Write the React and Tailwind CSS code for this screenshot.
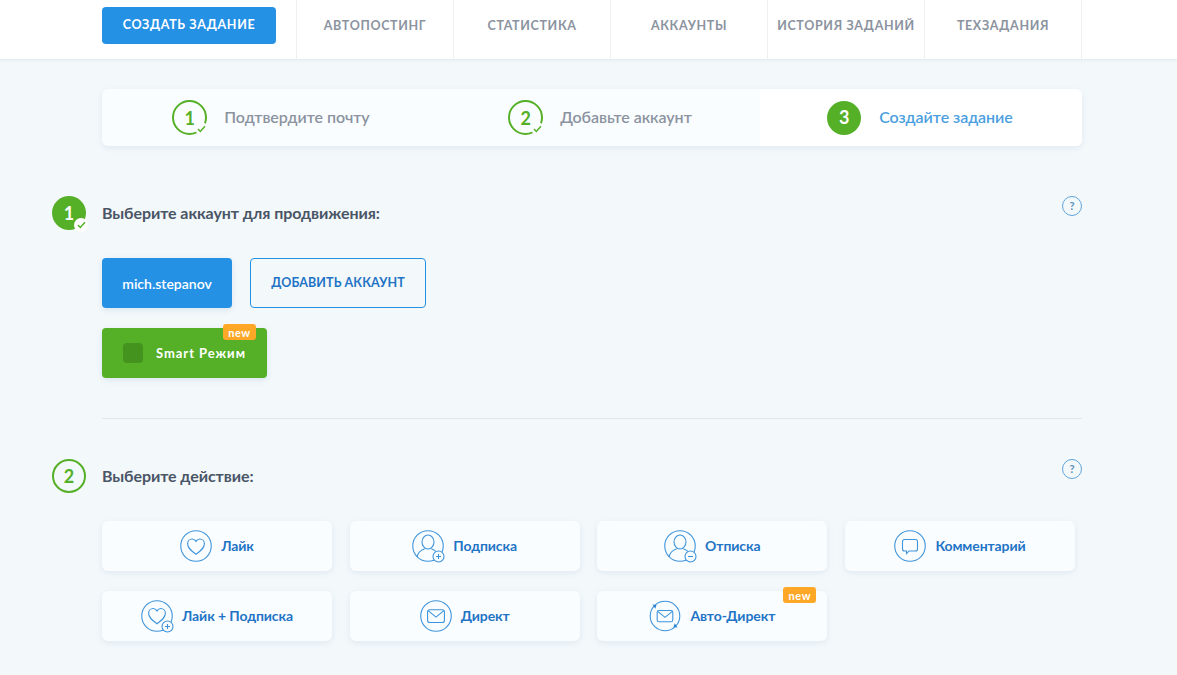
import React from "react";

function Circle() {
  return <circle cx="16" cy="16" r="15.25" fill="none" stroke="#3f94db" strokeWidth="1.1" />;
}
const Plus = ({ minus }) => (
  <g>
    <circle cx="26.5" cy="26.500" r="5.500" fill="#fafdff" stroke="#3f94db" strokeWidth="1.1" />
    <path d={minus ? "M24 26.500h5" : "M24 26.500h5M26.500 24v5"} stroke="#3f94db" strokeWidth="1.1" fill="none" />
  </g>
);
const HeartPath = ({ ty = 0 }) => (
  <path transform={`translate(0 ${ty})`} d="M16 24.300c-4.800-3.500-8.400-6.300-8.400-10.500 0-2.800 2.100-4.800 4.500-4.800 1.600 0 3 .9 3.900 2.400.9-1.500 2.300-2.400 3.900-2.400 2.400 0 4.500 2 4.500 4.800 0 4.200-3.600 7-8.400 10.500z" fill="none" stroke="#3f94db" strokeWidth="1.1" />
);
const Person = () => (
  <g fill="none" stroke="#3f94db" strokeWidth="1.1">
    <ellipse cx="16" cy="12" rx="6" ry="7" />
    <path d="M5 27c.8-4.600 4.400-7 7.800-8.200M27 27c-.8-4.600-4.400-7-7.800-8.200" />
  </g>
);
const Mail = ({ small }) => (
  <g fill="none" stroke="#3f94db" strokeWidth="1.1">
    {small ? (
      <>
        <rect x="8.200" y="10.500" width="15.600" height="11.200" rx="1.800" />
        <path d="M8.700 11.300l7.300 6 7.300-6" />
      </>
    ) : (
      <>
        <rect x="7.600" y="9.700" width="16.800" height="12.800" rx="2" />
        <path d="M8.100 10.600l7.900 6.500 7.900-6.500" />
      </>
    )}
  </g>
);
const Icon = ({ kind }) => {
  const s = { width: 32, height: 32, viewBox: "0 0 32 32", className: "shrink-0 overflow-visible" };
  if (kind === "like") return <svg {...s}><Circle /><HeartPath /></svg>;
  if (kind === "likeplus") return <svg {...s}><Circle /><HeartPath ty={-0.5} /><Plus /></svg>;
  if (kind === "sub") return <svg {...s}><Circle /><Person /><Plus /></svg>;
  if (kind === "unsub") return <svg {...s}><Circle /><Person /><Plus minus /></svg>;
  if (kind === "comment") return (
    <svg {...s}><Circle />
      <path d="M10.500 9.500h11a2 2 0 0 1 2 2v7.500a2 2 0 0 1-2 2h-6.500l-2.500 2.700v-2.700h-2a2 2 0 0 1-2-2v-7.500a2 2 0 0 1 2-2z" fill="none" stroke="#3f94db" strokeWidth="1.1" />
    </svg>);
  if (kind === "mail") return <svg {...s}><Circle /><Mail /></svg>;
  return (
    <svg {...s}>
      <circle cx="16" cy="16" r="14.800" fill="none" stroke="#3f94db" strokeWidth="1.1" />
      <path d="M3.500 4.500l4 .6-1.200 3.600zM28.500 27.500l-4-.6 1.200-3.600z" fill="#2b83d6" />
      <Mail small />
    </svg>);
};

const New = ({ className }) => (
  <span className={`absolute flex h-[16px] w-[33px] items-center justify-center rounded-[3px] bg-[#ffa726] text-[11px] font-bold leading-none tracking-[0.6px] text-white ${className}`}>new</span>
);

const Check = ({ className, bg = "#fafdff" }) => (
  <span className={`absolute flex h-[13px] w-[13px] items-center justify-center rounded-full ${className}`} style={{ background: bg }}>
    <svg width="9" height="8" viewBox="0 0 9 8"><path d="M1 4l2.300 2.500L8 1.300" fill="none" stroke="#55b028" strokeWidth="1.500" /></svg>
  </span>
);

const Help = () => (
  <span className="flex h-[20px] w-[20px] items-center justify-center rounded-full border border-[#5fa5dc] text-[11px] font-bold text-[#5b8fb8]">?</span>
);

function Step({ n, label, w }) {
  return (
    <div className={`flex items-center justify-center gap-[17px] ${w}`}>
      <span className="relative flex h-[35px] w-[35px] items-center justify-center rounded-full border-2 border-[#55b028] pt-[1px] text-[18px] font-bold text-[#55b028]">
        {n}
        <Check className="-bottom-[2px] -right-[3px]" />
      </span>
      <span className="-mt-[2px] text-[16px] font-semibold tracking-[-0.05px] text-[#8b939f]">{label}</span>
    </div>
  );
}

function Card({ icon, label, badge }) {
  return (
    <div className="relative flex h-[50px] w-[230px] items-center justify-center rounded-[6px] bg-[#fafdff] shadow-[0_2px_6px_rgba(90,130,170,0.12)]">
      <div className="flex items-center gap-[9px]">
        <Icon kind={icon} />
        <span className="-mt-[2px] text-[14px] font-bold tracking-[-0.1px] text-[#1f74c6]">{label}</span>
      </div>
      {badge && <New className="-top-[4px] right-[11px]" />}
    </div>
  );
}

export default function App() {
  const tabs = ["АВТОПОСТИНГ", "СТАТИСТИКА", "АККАУНТЫ", "ИСТОРИЯ ЗАДАНИЙ", "ТЕХЗАДАНИЯ"];
  return (
    <div className="h-[675px] overflow-hidden bg-[#f3f8fb] font-['Lato','Noto_Sans',sans-serif]">
      <header className="flex h-[59px] bg-white pl-[102px] shadow-[0_1px_3px_rgba(90,120,150,0.12)]">
        <div className="pt-[7px]">
          <button className="h-[37px] w-[174px] rounded-[4px] bg-[#2591e5] text-[12.500px] font-bold tracking-[0.65px] text-white">СОЗДАТЬ ЗАДАНИЕ</button>
        </div>
        <nav className="ml-[20px] flex border-r border-[#eef1f4]">
          {tabs.map((t) => (
            <div key={t} className="flex h-[59px] w-[157px] items-center justify-center whitespace-nowrap border-l border-[#eef1f4] pb-[7px] text-[12.500px] font-bold tracking-[0.65px] text-[#8b939f]">{t}</div>
          ))}
        </nav>
      </header>

      <main className="relative pl-[102px] pr-[95px]">
        <div className="mt-[30px] flex h-[57px] overflow-hidden rounded-[6px] bg-[#fafdff] shadow-[0_2px_6px_rgba(90,130,170,0.12)]">
          <Step n="1" label="Подтвердите почту" w="w-[336px] pl-[2px]" />
          <Step n="2" label="Добавьте аккаунт" w="w-[322px] pl-[2px]" />
          <div className="flex flex-1 items-center justify-center gap-[18px] bg-white pr-[2px]">
            <span className="flex h-[34px] w-[34px] items-center justify-center rounded-full bg-[#55b028] text-[18px] font-bold text-white">3</span>
            <span className="-mt-[2px] text-[16px] font-semibold tracking-[-0.05px] text-[#4b9fdf]">Создайте задание</span>
          </div>
        </div>

        <section className="relative mt-[50px]">
          <div className="flex h-[34px] items-center justify-between">
            <div className="relative -ml-[50px] flex items-center gap-[16px]">
              <span className="relative flex h-[34px] w-[34px] items-center justify-center rounded-full bg-[#55b028] text-[18px] font-bold text-white">
                1
                <Check className="-bottom-[2px] -right-[2px] h-[14px] w-[14px]" bg="#ffffff" />
              </span>
              <h2 className="text-[16px] font-bold tracking-[-0.08px] text-[#4a5566]">Выберите аккаунт для продвижения:</h2>
            </div>
            <div className="-mt-[14px]"><Help /></div>
          </div>

          <div className="mt-[28px] flex gap-[18px]">
            <button className="h-[50px] w-[130px] rounded-[4px] bg-[#2591e5] text-[14px] font-semibold text-white shadow-[0_2px_6px_rgba(90,130,170,0.15)]">mich.stepanov</button>
            <button className="h-[50px] w-[176px] rounded-[4px] border border-[#2591e5] text-[12.500px] font-bold tracking-[0.1px] text-[#1f74c6]">ДОБАВИТЬ АККАУНТ</button>
          </div>

          <div className="relative mt-[20px] flex h-[50px] w-[165px] items-center rounded-[4px] bg-[#55b028] pl-[21px] shadow-[0_2px_6px_rgba(90,130,170,0.15)]">
            <span className="h-[20px] w-[20px] rounded-[4px] bg-[#44931f]" />
            <span className="ml-[13px] mt-[1px] text-[13px] font-bold tracking-[0.95px] text-white">Smart Режим</span>
            <New className="-top-[4px] right-[11px]" />
          </div>
        </section>

        <hr className="mt-[40px] border-0 border-t border-[#e2e7ea]" />

        <section className="mt-[40px]">
          <div className="flex h-[34px] items-center justify-between">
            <div className="-ml-[50px] flex items-center gap-[16px]">
              <span className="flex h-[34px] w-[34px] items-center justify-center rounded-full border-2 border-[#55b028] text-[18px] font-bold text-[#55b028]">2</span>
              <h2 className="text-[16px] font-bold tracking-[-0.08px] text-[#4a5566]">Выберите действие:</h2>
            </div>
            <div className="-mt-[14px]"><Help /></div>
          </div>
          <div className="mt-[28px] grid grid-cols-[repeat(4,230px)] gap-x-[17.670px] gap-y-[20px]">
            <Card icon="like" label="Лайк" />
            <Card icon="sub" label="Подписка" />
            <Card icon="unsub" label="Отписка" />
            <Card icon="comment" label="Комментарий" />
            <Card icon="likeplus" label="Лайк + Подписка" />
            <Card icon="mail" label="Директ" />
            <Card icon="auto" label="Авто-Директ" badge />
          </div>
        </section>
      </main>
    </div>
  );
}
